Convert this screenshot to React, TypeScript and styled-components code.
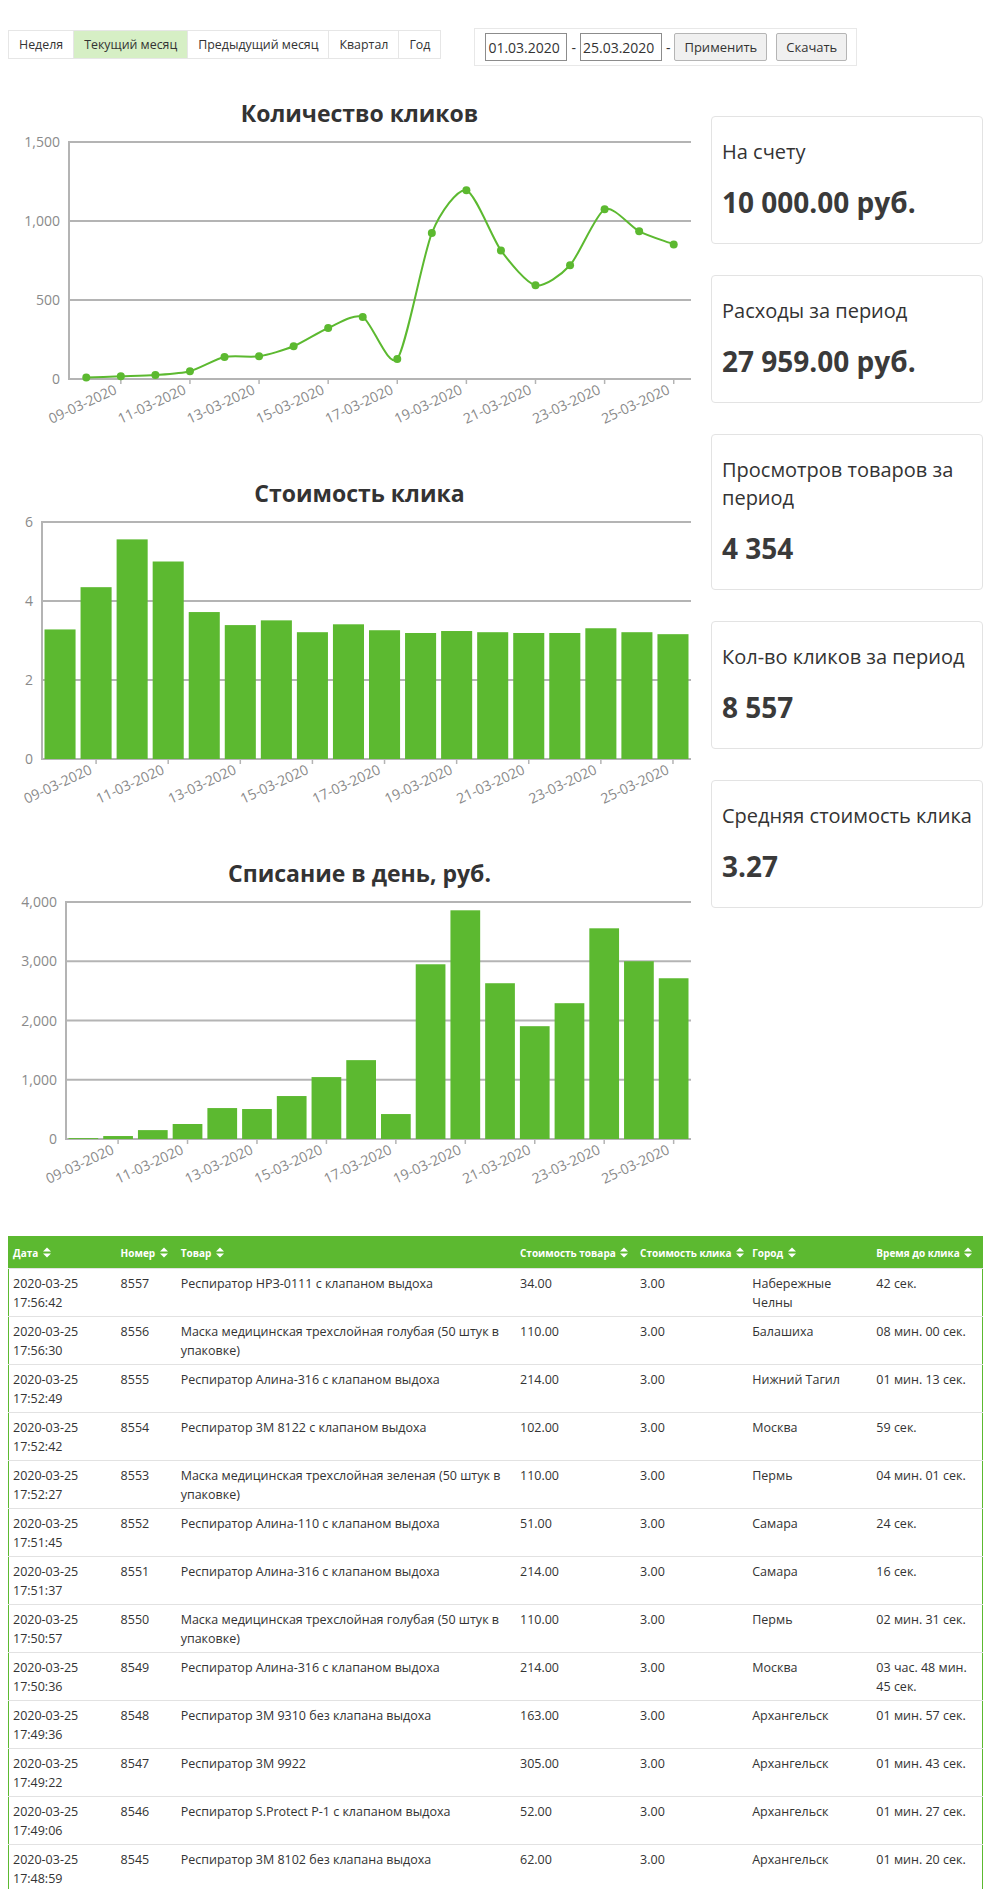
import styled, { createGlobalStyle } from 'styled-components';

const GREEN = '#5cb930';

const GlobalStyle = createGlobalStyle`
    body {
        margin: 0;
        font-family: 'Open Sans', 'Noto Sans', sans-serif;
        color: #333;
        background: #fff;
    }
`;

const days = Array.from({ length: 18 }, (_, i) => `${String(i + 8).padStart(2, '0')}-03-2020`);

const clicks = [9, 17, 25, 49, 139, 144, 207, 323, 392, 127, 924, 1194, 814, 593, 720, 1074, 935, 852];
const clickCost = [3.28, 4.35, 5.56, 5.0, 3.72, 3.39, 3.51, 3.21, 3.41, 3.26, 3.19, 3.24, 3.21, 3.19, 3.19, 3.31, 3.21, 3.16];
const spend = [15, 50, 150, 253, 522, 506, 725, 1045, 1331, 421, 2949, 3860, 2629, 1904, 2292, 3556, 3000, 2713];

const tabs = ['Неделя', 'Текущий месяц', 'Предыдущий месяц', 'Квартал', 'Год'];

const cards = [
    { label: 'На счету', value: '10 000.00 руб.' },
    { label: 'Расходы за период', value: '27 959.00 руб.' },
    { label: 'Просмотров товаров за период', value: '4 354' },
    { label: 'Кол-во кликов за период', value: '8 557' },
    { label: 'Средняя стоимость клика', value: '3.27' },
];

const columns = ['Дата', 'Номер', 'Товар', 'Стоимость товара', 'Стоимость клика', 'Город', 'Время до клика'];
const colWidths = [108, 60, 339, 120, 112, 124, 110];

const rows = [
    ['17:56:42', '8557', 'Респиратор НРЗ-0111 с клапаном выдоха', '34.00', 'Набережные Челны', '42 сек.'],
    ['17:56:30', '8556', 'Маска медицинская трехслойная голубая (50 штук в упаковке)', '110.00', 'Балашиха', '08 мин. 00 сек.'],
    ['17:52:49', '8555', 'Респиратор Алина-316 с клапаном выдоха', '214.00', 'Нижний Тагил', '01 мин. 13 сек.'],
    ['17:52:42', '8554', 'Респиратор 3M 8122 с клапаном выдоха', '102.00', 'Москва', '59 сек.'],
    ['17:52:27', '8553', 'Маска медицинская трехслойная зеленая (50 штук в упаковке)', '110.00', 'Пермь', '04 мин. 01 сек.'],
    ['17:51:45', '8552', 'Респиратор Алина-110 с клапаном выдоха', '51.00', 'Самара', '24 сек.'],
    ['17:51:37', '8551', 'Респиратор Алина-316 с клапаном выдоха', '214.00', 'Самара', '16 сек.'],
    ['17:50:57', '8550', 'Маска медицинская трехслойная голубая (50 штук в упаковке)', '110.00', 'Пермь', '02 мин. 31 сек.'],
    ['17:50:36', '8549', 'Респиратор Алина-316 с клапаном выдоха', '214.00', 'Москва', '03 час. 48 мин. 45 сек.'],
    ['17:49:36', '8548', 'Респиратор 3M 9310 без клапана выдоха', '163.00', 'Архангельск', '01 мин. 57 сек.'],
    ['17:49:22', '8547', 'Респиратор 3M 9922', '305.00', 'Архангельск', '01 мин. 43 сек.'],
    ['17:49:06', '8546', 'Респиратор S.Protect P-1 с клапаном выдоха', '52.00', 'Архангельск', '01 мин. 27 сек.'],
    ['17:48:59', '8545', 'Респиратор 3M 8102 без клапана выдоха', '62.00', 'Архангельск', '01 мин. 20 сек.'],
];

// svg geometry shared by all charts
const SVG_W = 703;
const SVG_H = 344;
const TOP = 11;
const BOTTOM = 248;
const RIGHT = 683;

type Pt = { x: number; y: number };

// same smoothing as morris.js line charts
const smoothPath = (pts: Pt[]) => {
    const grads = pts.map((p, i) => {
        if (i === 0) return (pts[1].y - p.y) / (pts[1].x - p.x);
        if (i === pts.length - 1) return (p.y - pts[i - 1].y) / (p.x - pts[i - 1].x);
        return (pts[i + 1].y - pts[i - 1].y) / (pts[i + 1].x - pts[i - 1].x);
    });
    let d = `M${pts[0].x},${pts[0].y}`;
    for (let i = 1; i < pts.length; i++) {
        const prev = pts[i - 1];
        const p = pts[i];
        const ix = (p.x - prev.x) / 4;
        const y1 = Math.min(BOTTOM, prev.y + ix * grads[i - 1]);
        const y2 = Math.min(BOTTOM, p.y - ix * grads[i]);
        d += `C${prev.x + ix},${y1},${p.x - ix},${y2},${p.x},${p.y}`;
    }
    return d;
};

type ChartProps = {
    title: string;
    kind: 'line' | 'bar';
    values: number[];
    max: number;
    step: number;
    left: number;
};

const Chart = ({ title, kind, values, max, step, left }: ChartProps) => {
    const slot = (RIGHT - left) / values.length;
    const cx = (i: number) => left + (i + 0.5) * slot;
    const yFor = (v: number) => BOTTOM - (v / max) * (BOTTOM - TOP);
    const gridValues: number[] = [];
    for (let v = 0; v <= max; v += step) gridValues.push(v);
    const pts = values.map((v, i) => ({ x: cx(i), y: yFor(v) }));

    return (
        <ChartBlock>
            <ChartTitle>{title}</ChartTitle>
            <svg width={SVG_W} height={SVG_H}>
                {gridValues.map((v) => (
                    <g key={v}>
                        <line x1={left} x2={RIGHT} y1={yFor(v)} y2={yFor(v)} stroke="#b4b4b4" strokeWidth={2} />
                        <AxisText x={left - 9} y={yFor(v) + 5} textAnchor="end">
                            {v.toLocaleString('en-US')}
                        </AxisText>
                    </g>
                ))}
                <line x1={left} x2={left} y1={TOP - 1} y2={BOTTOM + 1} stroke="#b4b4b4" strokeWidth={2} />
                {days.map((d, i) =>
                    i % 2 === 1 ? (
                        <g key={d}>
                            <line x1={cx(i)} x2={cx(i)} y1={BOTTOM} y2={BOTTOM + 5} stroke="#b4b4b4" strokeWidth={1.5} />
                            <AxisText
                                x={cx(i) - 3}
                                y={BOTTOM + 14}
                                textAnchor="end"
                                transform={`rotate(-25 ${cx(i) - 3} ${BOTTOM + 14})`}
                            >
                                {d}
                            </AxisText>
                        </g>
                    ) : null
                )}
                {kind === 'bar' &&
                    values.map((v, i) => (
                        <rect key={i} x={left + i * slot + 2.5} y={yFor(v)} width={slot - 5} height={BOTTOM - yFor(v)} fill={GREEN} />
                    ))}
                {kind === 'line' && (
                    <>
                        <path d={smoothPath(pts)} fill="none" stroke={GREEN} strokeWidth={2} />
                        {pts.map((p, i) => (
                            <circle key={i} cx={p.x} cy={p.y} r={4} fill={GREEN} />
                        ))}
                    </>
                )}
            </svg>
        </ChartBlock>
    );
};

const SortIcon = () => (
    <svg width="8" height="11" viewBox="0 0 8 11">
        <polygon points="0,4.5 4,0.5 8,4.5" fill="#fff" />
        <polygon points="0,6.5 8,6.5 4,10.5" fill="#fff" />
    </svg>
);

const App = () => {
    return (
        <Page>
            <GlobalStyle />
            <TopBar>
                <Tabs>
                    {tabs.map((t) => (
                        <Tab key={t} $active={t === 'Текущий месяц'}>
                            {t}
                        </Tab>
                    ))}
                </Tabs>
                <DateForm>
                    <DateInput defaultValue="01.03.2020" />
                    <Dash>-</Dash>
                    <DateInput defaultValue="25.03.2020" />
                    <Dash>-</Dash>
                    <FormButton>Применить</FormButton>
                    <FormButton>Скачать</FormButton>
                </DateForm>
            </TopBar>
            <Main>
                <ChartsColumn>
                    <Chart title="Количество кликов" kind="line" values={clicks} max={1500} step={500} left={61} />
                    <Chart title="Стоимость клика" kind="bar" values={clickCost} max={6} step={2} left={34} />
                    <Chart title="Списание в день, руб." kind="bar" values={spend} max={4000} step={1000} left={58} />
                </ChartsColumn>
                <CardsColumn>
                    {cards.map((c) => (
                        <StatCard key={c.label}>
                            <CardLabel>{c.label}</CardLabel>
                            <CardValue>{c.value}</CardValue>
                        </StatCard>
                    ))}
                </CardsColumn>
            </Main>
            <StatsTable>
                <colgroup>
                    {colWidths.map((w, i) => (
                        <col key={i} style={{ width: w }} />
                    ))}
                </colgroup>
                <thead>
                    <tr>
                        {columns.map((c) => (
                            <HeadCell key={c}>
                                {c} <SortIcon />
                            </HeadCell>
                        ))}
                    </tr>
                </thead>
                <tbody>
                    {rows.map((r) => (
                        <tr key={r[1]}>
                            <Cell>2020-03-25 {r[0]}</Cell>
                            <Cell>{r[1]}</Cell>
                            <Cell>{r[2]}</Cell>
                            <Cell>{r[3]}</Cell>
                            <Cell>3.00</Cell>
                            <Cell>{r[4]}</Cell>
                            <Cell>{r[5]}</Cell>
                        </tr>
                    ))}
                </tbody>
            </StatsTable>
        </Page>
    );
};

const Page = styled.div`
    width: 993px;
    height: 1889px;
    overflow: hidden;
    box-sizing: border-box;
    padding: 28px 0 0 8px;
`;

const TopBar = styled.div`
    display: flex;
    align-items: flex-start;
    gap: 33px;
    height: 38px;
`;

const Tabs = styled.div`
    display: flex;
    margin-top: 2px;
    border: 1px solid #e6e6e6;
`;

const Tab = styled.div<{ $active?: boolean }>`
    height: 27px;
    line-height: 27px;
    padding: 0 10px;
    font-size: 12.4px;
    color: #333;
    background: ${(p) => (p.$active ? '#d6efc5' : '#fff')};
    & + & {
        border-left: 1px solid #e6e6e6;
    }
`;

const DateForm = styled.div`
    display: flex;
    align-items: center;
    padding: 4px 9px 4px 10px;
    border: 1px solid #e8e8e8;
`;

const DateInput = styled.input`
    box-sizing: border-box;
    width: 82px;
    height: 28px;
    padding: 0 2px;
    border: 1px solid #8c8c8c;
    font-family: 'Open Sans', sans-serif;
    font-size: 14px;
    color: #333;
`;

const Dash = styled.span`
    margin: 0 4px;
    font-size: 14px;
`;

const FormButton = styled.button`
    box-sizing: border-box;
    height: 28px;
    padding: 0 9px;
    margin-right: 9px;
    border: 1px solid #b5b5b5;
    border-radius: 2px;
    background: #f0f0f0;
    font-family: 'Open Sans', sans-serif;
    font-size: 13px;
    color: #333;
    &:last-child {
        margin-right: 0;
    }
`;

const Main = styled.div`
    display: flex;
    margin-top: 29px;
    width: 975px;
`;

const ChartsColumn = styled.div`
    width: 703px;
    display: flex;
    flex-direction: column;
`;

const ChartBlock = styled.div`
    height: 380px;
    svg {
        display: block;
    }
`;

const ChartTitle = styled.h3`
    margin: 0;
    height: 36px;
    line-height: 36px;
    text-align: center;
    font-size: 23px;
    font-weight: 700;
    color: #333;
`;

const AxisText = styled.text`
    font-family: 'Open Sans', sans-serif;
    font-size: 14px;
    fill: #8a8a8a;
`;

const CardsColumn = styled.div`
    width: 272px;
    padding-top: 21px;
    display: flex;
    flex-direction: column;
    gap: 31px;
`;

const StatCard = styled.div`
    padding: 21px 6px 23px 10px;
    border: 1px solid #e3e3e3;
    border-radius: 4px;
`;

const CardLabel = styled.div`
    font-size: 20px;
    line-height: 28px;
    color: #333;
`;

const CardValue = styled.div`
    margin-top: 18px;
    font-size: 28px;
    line-height: 36px;
    font-weight: 700;
    color: #3a3a3a;
`;

const StatsTable = styled.table`
    margin-top: 1px;
    width: 975px;
    table-layout: fixed;
    border-collapse: collapse;
    border: 1px solid ${GREEN};
`;

const HeadCell = styled.th`
    height: 31px;
    padding: 0 4px;
    background: ${GREEN};
    color: #fff;
    font-size: 10px;
    font-weight: 700;
    text-align: left;
    white-space: nowrap;
    vertical-align: middle;
    svg {
        margin-left: 2px;
        vertical-align: -1px;
    }
`;

const Cell = styled.td`
    padding: 5px 4px 4px 4px;
    font-size: 12.5px;
    line-height: 19px;
    color: #333;
    vertical-align: top;
    border-top: 1px solid #e2e2e2;
`;

export default App;
